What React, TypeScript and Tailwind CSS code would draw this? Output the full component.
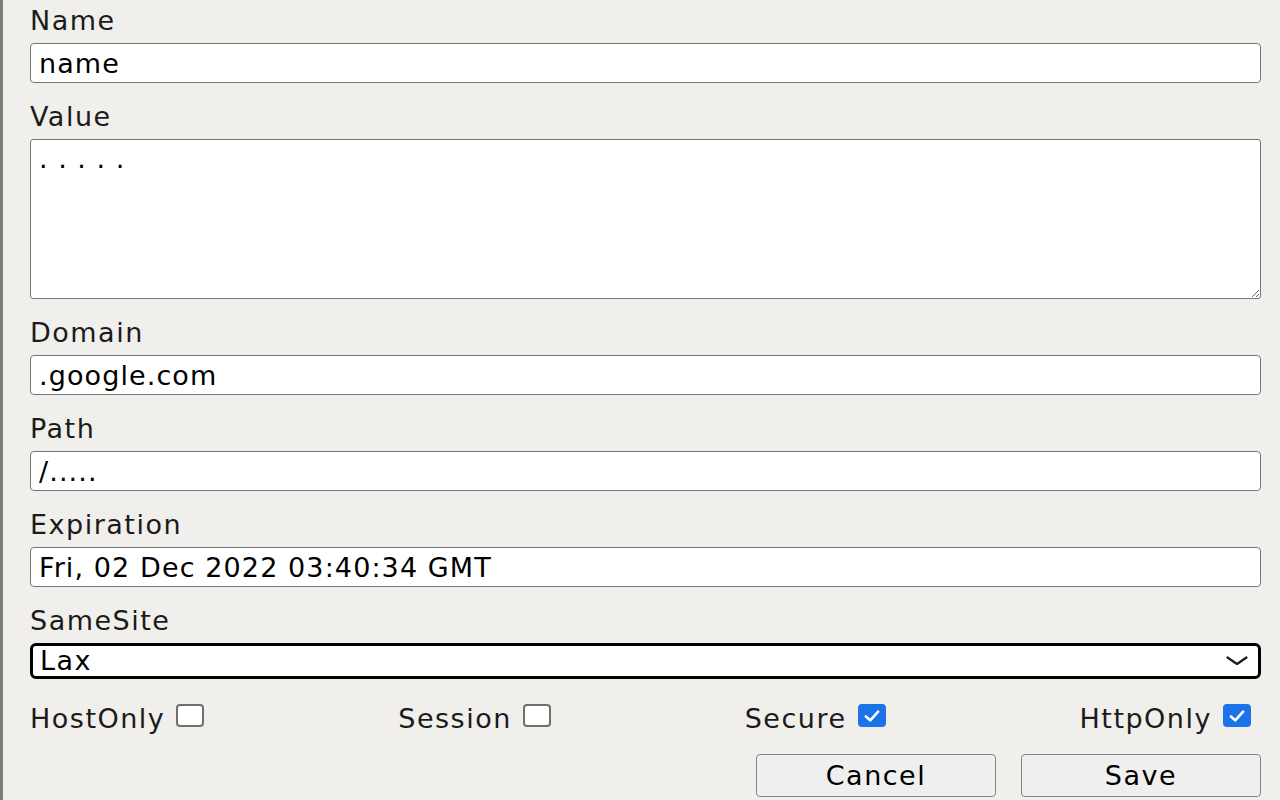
import type { ReactNode } from "react";

const FIELD =
  "block h-10 w-full rounded-[4px] border border-[#767676] bg-white px-[8px] text-[27px] tracking-[1.1px] text-black outline-none";

function Label({ children, first }: { children: ReactNode; first?: boolean }) {
  return (
    <div className={`${first ? "mt-0" : "mt-[18px]"} mb-[6px] h-8 leading-8 text-[#1b1b1b]`}>
      {children}
    </div>
  );
}

function Box({ checked }: { checked?: boolean }) {
  if (checked) {
    return (
      <span className="mt-[1px] grid h-[23px] w-[28px] flex-none place-items-center rounded-[4px] bg-[#1a73e8]">
        <svg viewBox="0 0 20 16" className="h-[14px] w-[18px]" fill="none">
          <path d="M3 8.5 L8 13 L17 3" stroke="white" strokeWidth="3" strokeLinecap="round" strokeLinejoin="round" />
        </svg>
      </span>
    );
  }
  return (
    <span className="mt-[1px] block h-[23px] w-[28px] flex-none rounded-[4px] border-2 border-[#6f6f6f] bg-white" />
  );
}

function Flag({ label, checked }: { label: string; checked?: boolean }) {
  return (
    <label className="flex items-start gap-[11px]">
      <span className="leading-8">{label}</span>
      <Box checked={checked} />
    </label>
  );
}

export default function App() {
  return (
    <div className="min-h-screen border-l-[3px] border-[#7d7d7d] bg-[#f1efeb] pb-4 pl-[27px] pr-[19px] pt-[5px] font-['DejaVu_Sans',sans-serif] text-[27px] leading-8 tracking-[1.5px] text-[#111]">
      <Label first>Name</Label>
      <input readOnly value="name" className={FIELD} />

      <Label>Value</Label>
      <textarea
        readOnly
        value=". . . . ."
        className="block h-40 w-full rounded-[3px] border border-[#767676] bg-white px-[8px] pt-[3px] text-[27px] leading-8 tracking-[1px] text-black outline-none"
      />

      <Label>Domain</Label>
      <input readOnly value=".google.com" className={FIELD} />

      <Label>Path</Label>
      <input readOnly value="/....." className={FIELD} />

      <Label>Expiration</Label>
      <input readOnly value="Fri, 02 Dec 2022 03:40:34 GMT" className={FIELD} />

      <Label>SameSite</Label>
      <div className="flex h-9 items-center justify-between rounded-[6px] border-[3px] border-black bg-white pl-[7px] pr-[10px] text-black">
        <span className="leading-8">Lax</span>
        <svg viewBox="0 0 22 10" className="h-[10px] w-[22px]" fill="none">
          <path d="M1.5 1.5 L11 8 L20.5 1.5" stroke="#1a1a1a" strokeWidth="2.2" strokeLinecap="round" strokeLinejoin="round" />
        </svg>
      </div>

      <div className="mt-6 flex justify-between pr-[10px] text-[#1b1b1b]">
        <Flag label="HostOnly" />
        <Flag label="Session" />
        <Flag label="Secure" checked />
        <Flag label="HttpOnly" checked />
      </div>

      <div className="mt-[19px] flex justify-end gap-[25px]">
        <button className="h-[43px] w-[240px] rounded-[4px] border border-[#858585] bg-[#efefef] text-black">
          Cancel
        </button>
        <button className="h-[43px] w-[240px] rounded-[4px] border border-[#858585] bg-[#efefef] text-black">
          Save
        </button>
      </div>
    </div>
  );
}
